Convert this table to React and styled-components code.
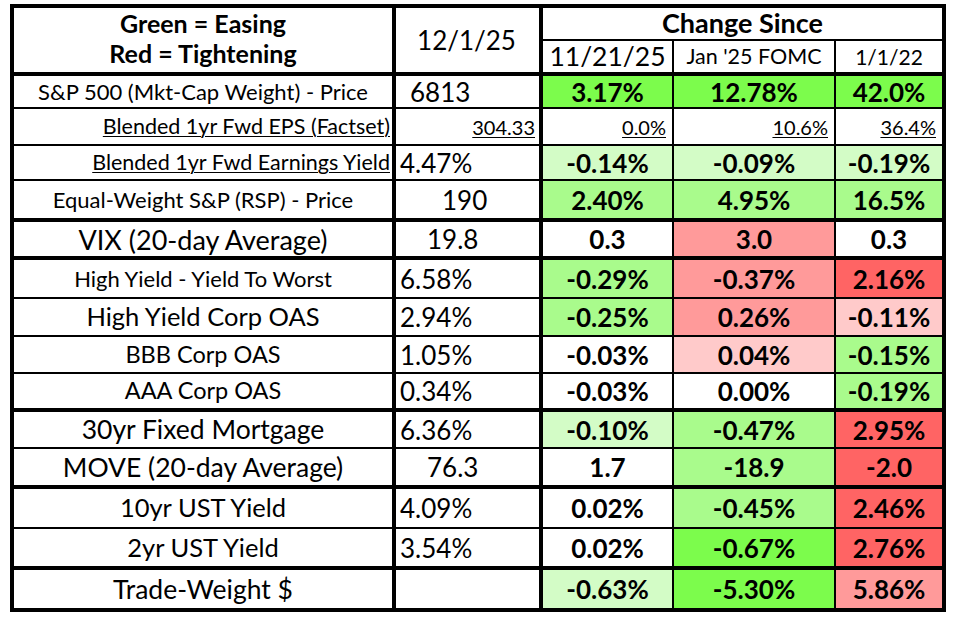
import React from "react";
import styled, { createGlobalStyle } from "styled-components";

const GlobalStyle = createGlobalStyle`
  body {
    margin: 0;
    background: #ffffff;
    font-family: Lato, "Open Sans", sans-serif;
    color: #000;
  }
`;

// cell fills, light -> strong
const fills = {
  g1: "#d3fcc6",
  g2: "#a9fb8c",
  g3: "#7cfc4c",
  r1: "#ffcaca",
  r2: "#ff9a9a",
  r3: "#ff6464"
};

const Page = styled.div`
  padding: 4px 0 0 10px;
`;

const Grid = styled.table`
  border-collapse: collapse;
  table-layout: fixed;
  width: 932px;
  border: 4px solid #000;
`;

const Row = styled.tr`
  height: ${p => p.$h}px;
  & > td {
    border-top: ${p => (p.$thick ? "4px" : "2px")} solid #000;
  }
`;

const Cell = styled.td`
  padding: 0 ${p => p.$padR || 0}px ${p => p.$padB || 0}px ${p => p.$padL || 0}px;
  border: 2px solid #000;
  border-left-width: ${p => (p.$heavyLeft ? 4 : 2)}px;
  background: ${p => (p.$fill ? fills[p.$fill] : "#fff")};
  font-size: ${p => p.$size || 26}px;
  font-weight: ${p => (p.$bold ? 700 : 400)};
  text-align: ${p => p.$align || "center"};
  text-decoration: ${p => (p.$under ? "underline" : "none")};
  text-underline-offset: 2px;
  text-decoration-thickness: 1px;
  line-height: 1;
  white-space: nowrap;
  overflow: hidden;
  vertical-align: ${p => p.$valign || "middle"};
`;

const HeadTitle = styled.div`
  font-size: 25px;
  font-weight: 700;
  line-height: 30px;
`;

const rows = [
  { label: "S&P 500 (Mkt-Cap Weight) - Price", ls: 22, h: 34, thick: true, value: "6813", vpad: 14, changes: [["3.17%", "g3"], ["12.78%", "g3"], ["42.0%", "g3"]] },
  { label: "Blended 1yr Fwd EPS (Factset)", ls: 21.5, h: 37, eps: true, value: "304.33", changes: [["0.0%"], ["10.6%"], ["36.4%"]] },
  { label: "Blended 1yr Fwd Earnings Yield", ls: 21.5, h: 35, under: true, value: "4.47%", vpad: 4, changes: [["-0.14%", "g1"], ["-0.09%", "g1"], ["-0.19%", "g1"]] },
  { label: "Equal-Weight S&P (RSP) - Price", ls: 22, h: 40, value: "190", vpad: 46, changes: [["2.40%", "g2"], ["4.95%", "g2"], ["16.5%", "g2"]] },
  { label: "VIX (20-day Average)", ls: 27, h: 38, thick: true, value: "19.8", vpad: 31, changes: [["0.3"], ["3.0", "r2"], ["0.3"]] },
  { label: "High Yield - Yield To Worst", ls: 22, h: 40, thick: true, value: "6.58%", vpad: 4, changes: [["-0.29%", "g2"], ["-0.37%", "r2"], ["2.16%", "r3"]] },
  { label: "High Yield Corp OAS", ls: 25.5, h: 38, value: "2.94%", vpad: 4, changes: [["-0.25%", "g2"], ["0.26%", "r2"], ["-0.11%", "r1"]] },
  { label: "BBB Corp OAS", ls: 23.5, h: 37, value: "1.05%", vpad: 4, changes: [["-0.03%"], ["0.04%", "r1"], ["-0.15%", "g2"]] },
  { label: "AAA Corp OAS", ls: 23.5, h: 37, value: "0.34%", vpad: 4, changes: [["-0.03%"], ["0.00%"], ["-0.19%", "g2"]] },
  { label: "30yr Fixed Mortgage", ls: 26.5, h: 38, thick: true, value: "6.36%", vpad: 4, changes: [["-0.10%", "g1"], ["-0.47%", "g2"], ["2.95%", "r3"]] },
  { label: "MOVE (20-day Average)", ls: 26.5, h: 39, value: "76.3", vpad: 31, changes: [["1.7"], ["-18.9", "g2"], ["-2.0", "r3"]] },
  { label: "10yr UST Yield", ls: 25.5, h: 41, thick: true, value: "4.09%", vpad: 4, changes: [["0.02%"], ["-0.45%", "g2"], ["2.46%", "r3"]] },
  { label: "2yr UST Yield", ls: 25.5, h: 40, value: "3.54%", vpad: 4, changes: [["0.02%"], ["-0.67%", "g3"], ["2.76%", "r3"]] },
  { label: "Trade-Weight $", ls: 26.5, h: 42, thick: true, value: "", changes: [["-0.63%", "g1"], ["-5.30%", "g3"], ["5.86%", "r2"]] }
];

const DataRow = ({ r }) => {
  if (r.eps) {
    return (
      <Row $h={r.h}>
        <Cell $size={r.ls} $align="right" $padR={2} $under>{r.label}</Cell>
        <Cell $size={20} $align="right" $padR={4} $under $heavyLeft>{r.value}</Cell>
        {r.changes.map(([v], i) => (
          <Cell key={i} $size={20} $align="right" $padR={6} $under $heavyLeft={i === 0}>{v}</Cell>
        ))}
      </Row>
    );
  }
  return (
    <Row $h={r.h} $thick={r.thick}>
      <Cell $size={r.ls} $align={r.under ? "right" : "center"} $padR={r.under ? 2 : 0} $under={r.under}>
        {r.label}
      </Cell>
      <Cell $align="left" $padL={r.vpad} $heavyLeft>{r.value}</Cell>
      {r.changes.map(([v, f], i) => (
        <Cell key={i} $bold $fill={f} $heavyLeft={i === 0}>{v}</Cell>
      ))}
    </Row>
  );
};

export default function App() {
  return (
    <Page>
      <GlobalStyle />
      <Grid>
        <colgroup>
          <col style={{ width: 382 }} />
          <col style={{ width: 147 }} />
          <col style={{ width: 132 }} />
          <col style={{ width: 162 }} />
          <col style={{ width: 109 }} />
        </colgroup>
        <tbody>
          <Row $h={34}>
            <Cell rowSpan={2} $valign="top">
              <HeadTitle>Green = Easing</HeadTitle>
              <HeadTitle>Red = Tightening</HeadTitle>
            </Cell>
            <Cell rowSpan={2} $heavyLeft $padR={2}>12/1/25</Cell>
            <Cell colSpan={3} $size={27} $bold $heavyLeft $padB={3}>Change Since</Cell>
          </Row>
          <Row $h={34}>
            <Cell $size={26.5} $heavyLeft>11/21/25</Cell>
            <Cell $size={21.5}>Jan '25 FOMC</Cell>
            <Cell $size={21}>1/1/22</Cell>
          </Row>
          {rows.map(r => (
            <DataRow key={r.label} r={r} />
          ))}
        </tbody>
      </Grid>
    </Page>
  );
}
